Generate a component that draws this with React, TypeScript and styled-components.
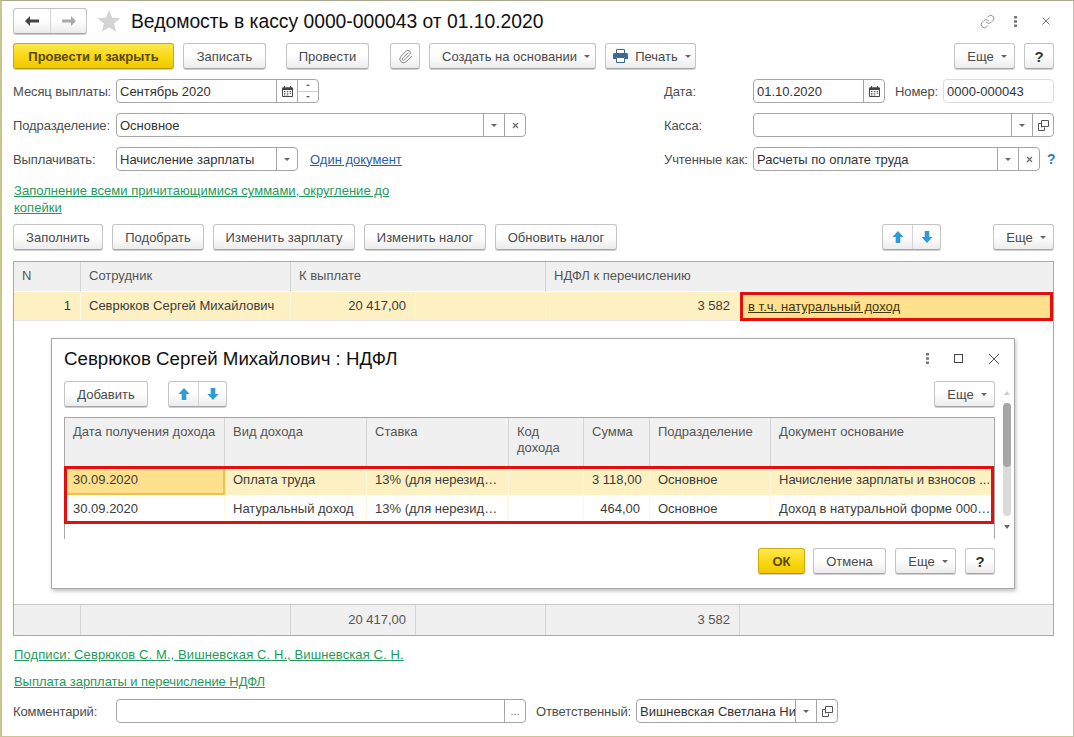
import React from "react";
import styled, { createGlobalStyle } from "styled-components";
import { Paperclip, Link } from "lucide-react";

const GlobalStyle = createGlobalStyle`
  html, body {
    margin: 0;
    padding: 0;
    background: #fff;
  }
  body {
    font-family: "Liberation Sans", Arial, sans-serif;
    font-size: 13px;
    color: #444;
  }
`;

const Caret = ({ $up }: { $up?: boolean }) => (
  <CaretSvg viewBox="0 0 6 3" $up={$up}>
    <path d="M0 0h6L3 3z" fill="currentColor" />
  </CaretSvg>
);

const SmallX = () => (
  <svg width="7" height="7" viewBox="0 0 7 7">
    <path d="M1 1l5 5M6 1L1 6" stroke="#666" strokeWidth="1.1" />
  </svg>
);

const CalendarIcon = () => (
  <svg width="11" height="11" viewBox="0 0 11 11">
    <path d="M0.5 2h10v8.5h-10z" fill="#fff" stroke="#444" />
    <path d="M0.5 1.5h10v2.5h-10z" fill="#444" />
    <path d="M2.5 0v2M8.5 0v2" stroke="#444" />
    <path d="M2 5.5h1.5M4.8 5.5h1.5M7.6 5.5h1.5M2 7.3h1.5M4.8 7.3h1.5M7.6 7.3h1.5M2 9h1.5M4.8 9h1.5" stroke="#555" />
  </svg>
);

const OpenIcon = () => (
  <svg width="11" height="11" viewBox="0 0 11 11">
    <path d="M3.5 7.5V0.5h7v6h-7" fill="#fff" stroke="#555" />
    <path d="M3.5 3.5H0.5v7h6V7.5" fill="none" stroke="#555" />
  </svg>
);

const ArrowH = ({ dir, color }: { dir: "left" | "right"; color: string }) => (
  <svg width="14" height="10" viewBox="0 0 14 10">
    <path
      d={dir === "left" ? "M0 5l5-5v3.4h9v3.2H5V10z" : "M14 5L9 0v3.4H0v3.2h9V10z"}
      fill={color}
    />
  </svg>
);

const ArrowV = ({ dir }: { dir: "up" | "down" }) => (
  <svg width="12" height="12" viewBox="0 0 12 13">
    <path
      d={dir === "up" ? "M6 0l6 6.5H8.5V13h-5V6.5H0z" : "M6 13L0 6.5h3.5V0h5v6.5H12z"}
      fill="#2f9ad6"
    />
  </svg>
);

const Star = () => (
  <svg width="24" height="24" viewBox="0 0 24 24">
    <path d="M12 1l3.2 7.7 8.3.6-6.4 5.3 2 8.1L12 18.4l-7.1 4.3 2-8.1L.5 9.3l8.3-.6z" fill="#d4d4d4" />
  </svg>
);

const Printer = () => (
  <svg width="15" height="14" viewBox="0 0 15 14">
    <path d="M3.5 0.5h8v4h-8z" fill="#fff" stroke="#3e6a8e" />
    <path d="M1.5 4h12A1.5 1.5 0 0 1 15 5.5V10h-3V8H3v2H0V5.5A1.5 1.5 0 0 1 1.5 4z" fill="#3e6a8e" />
    <path d="M3.5 8.5h8v5h-8z" fill="#fff" stroke="#3e6a8e" />
  </svg>
);

const Dots = () => (
  <svg width="3" height="11" viewBox="0 0 3 11">
    <path d="M0 0h3v2.4H0zM0 4.3h3v2.4H0zM0 8.6h3V11H0z" fill="#777" />
  </svg>
);

export default function App() {
  return (
    <>
      <GlobalStyle />
      <Page>
        <TitleRow>
          <ButtonGroup>
            <GroupCell $w={37}>
              <ArrowH dir="left" color="#444" />
            </GroupCell>
            <GroupCell $w={37}>
              <ArrowH dir="right" color="#aaa" />
            </GroupCell>
          </ButtonGroup>
          <StarWrap>
            <Star />
          </StarWrap>
          <Title>Ведомость в кассу 0000-000043 от 01.10.2020</Title>
          <WindowIcons>
            <Link size={15} color="#777" strokeWidth={1.3} />
            <Dots />
            <svg width="8" height="8" viewBox="0 0 8 8">
              <path d="M0.5 0.5l7 7M7.5 0.5l-7 7" stroke="#777" strokeWidth="1" />
            </svg>
          </WindowIcons>
        </TitleRow>

        <Toolbar>
          <PrimaryButton $w={161}>Провести и закрыть</PrimaryButton>
          <Button $w={83} $ml={9}>Записать</Button>
          <Button $w={83} $ml={20}>Провести</Button>
          <Button $w={30} $ml={21}>
            <Paperclip size={15} color="#888" strokeWidth={1.6} />
          </Button>
          <Button $w={167} $ml={9} $pl={7}>
            Создать на основании <Caret />
          </Button>
          <Button $w={91} $ml={9} $pl={3}>
            <Printer /> Печать <Caret />
          </Button>
          <Spacer />
          <Button $w={61} $pl={5}>
            Еще <Caret />
          </Button>
          <HelpButton $w={30} $ml={9}>?</HelpButton>
        </Toolbar>

        <Form>
          <FormCol>
            <FormRow>
              <Label $w={103}>Месяц выплаты:</Label>
              <Field $w={203}>
                <FieldValue>Сентябрь 2020</FieldValue>
                <FieldCell><CalendarIcon /></FieldCell>
                <SpinCell>
                  <SpinPart><Caret $up /></SpinPart>
                  <SpinPart><Caret /></SpinPart>
                </SpinCell>
              </Field>
            </FormRow>
            <FormRow>
              <Label $w={103}>Подразделение:</Label>
              <Field $w={410}>
                <FieldValue>Основное</FieldValue>
                <FieldCell><Caret /></FieldCell>
                <FieldCell><SmallX /></FieldCell>
              </Field>
            </FormRow>
            <FormRow>
              <Label $w={103}>Выплачивать:</Label>
              <Field $w={182}>
                <FieldValue>Начисление зарплаты</FieldValue>
                <FieldCell><Caret /></FieldCell>
              </Field>
              <BlueLink>Один документ</BlueLink>
            </FormRow>
          </FormCol>
          <FormCol>
            <FormRow>
              <Label $w={89}>Дата:</Label>
              <Field $w={132}>
                <FieldValue>01.10.2020</FieldValue>
                <FieldCell><CalendarIcon /></FieldCell>
              </Field>
              <NumberLabel>Номер:</NumberLabel>
              <Field $w={111} $light>
                <FieldValue>0000-000043</FieldValue>
              </Field>
            </FormRow>
            <FormRow>
              <Label $w={89}>Касса:</Label>
              <Field $w={301}>
                <FieldValue />
                <FieldCell><Caret /></FieldCell>
                <FieldCell><OpenIcon /></FieldCell>
              </Field>
            </FormRow>
            <FormRow>
              <Label $w={89}>Учтенные как:</Label>
              <Field $w={287}>
                <FieldValue>Расчеты по оплате труда</FieldValue>
                <FieldCell><Caret /></FieldCell>
                <FieldCell><SmallX /></FieldCell>
              </Field>
              <HelpMark>?</HelpMark>
            </FormRow>
          </FormCol>
        </Form>

        <FillLink>Заполнение всеми причитающимися суммами, округление до копейки</FillLink>

        <TableToolbar>
          <Button $w={90}>Заполнить</Button>
          <Button $w={92} $ml={9}>Подобрать</Button>
          <Button $w={142} $ml={9}>Изменить зарплату</Button>
          <Button $w={122} $ml={9}>Изменить налог</Button>
          <Button $w={122} $ml={9}>Обновить налог</Button>
          <Spacer />
          <ButtonGroup>
            <GroupCell $w={30}><ArrowV dir="up" /></GroupCell>
            <GroupCell $w={29}><ArrowV dir="down" /></GroupCell>
          </ButtonGroup>
          <Button $w={61} $ml={52} $pl={5}>
            Еще <Caret />
          </Button>
        </TableToolbar>

        <Table>
          <MainGrid>
            <HeadCell>N</HeadCell>
            <HeadCell>Сотрудник</HeadCell>
            <HeadCell $span={2}>К выплате</HeadCell>
            <HeadCell $span={2}>НДФЛ к перечислению</HeadCell>
          </MainGrid>
          <MainGrid>
            <RowCell $right>1</RowCell>
            <RowCell>Севрюков Сергей Михайлович</RowCell>
            <RowCell $right>20 417,00</RowCell>
            <RowCell />
            <RowCell $right>3 582</RowCell>
            <HighlightCell>в т.ч. натуральный доход</HighlightCell>
          </MainGrid>

          <TableBody>
            <Dialog>
              <DialogTitleRow>
                <DialogTitle>Севрюков Сергей Михайлович : НДФЛ</DialogTitle>
                <DialogIcons>
                  <Dots />
                  <MaxBox />
                  <svg width="12" height="12" viewBox="0 0 12 12">
                    <path d="M1 1l10 10M11 1L1 11" stroke="#555" strokeWidth="1" />
                  </svg>
                </DialogIcons>
              </DialogTitleRow>
              <DialogMain>
                <DialogContent>
                  <DialogToolbar>
                    <Button $w={84}>Добавить</Button>
                    <ButtonGroup $ml={20}>
                      <GroupCell $w={30}><ArrowV dir="up" /></GroupCell>
                      <GroupCell $w={29}><ArrowV dir="down" /></GroupCell>
                    </ButtonGroup>
                    <Spacer />
                    <Button $w={61} $pl={5}>
                      Еще <Caret />
                    </Button>
                  </DialogToolbar>
                  <IncomeTable>
                    <IncomeGrid $head>
                      <IncomeHead>Дата получения дохода</IncomeHead>
                      <IncomeHead>Вид дохода</IncomeHead>
                      <IncomeHead>Ставка</IncomeHead>
                      <IncomeHead>Код<br />дохода</IncomeHead>
                      <IncomeHead>Сумма</IncomeHead>
                      <IncomeHead>Подразделение</IncomeHead>
                      <IncomeHead>Документ основание</IncomeHead>
                    </IncomeGrid>
                    <SelectedRows>
                      <IncomeGrid $tinted>
                        <ActiveCell>30.09.2020</ActiveCell>
                        <IncomeCell>Оплата труда</IncomeCell>
                        <IncomeCell>13% (для нерезид…</IncomeCell>
                        <IncomeCell />
                        <IncomeCell $right>3 118,00</IncomeCell>
                        <IncomeCell>Основное</IncomeCell>
                        <IncomeCell>Начисление зарплаты и взносов ...</IncomeCell>
                      </IncomeGrid>
                      <IncomeGrid>
                        <IncomeCell>30.09.2020</IncomeCell>
                        <IncomeCell>Натуральный доход</IncomeCell>
                        <IncomeCell>13% (для нерезид…</IncomeCell>
                        <IncomeCell />
                        <IncomeCell $right>464,00</IncomeCell>
                        <IncomeCell>Основное</IncomeCell>
                        <IncomeCell>Доход в натуральной форме 000…</IncomeCell>
                      </IncomeGrid>
                    </SelectedRows>
                  </IncomeTable>
                </DialogContent>
                <ScrollBar>
                  <ScrollArrow $up />
                  <ScrollTrack>
                    <ScrollThumb />
                  </ScrollTrack>
                  <ScrollArrow />
                </ScrollBar>
              </DialogMain>
              <DialogFooter>
                <PrimaryButton $w={47}>ОК</PrimaryButton>
                <Button $w={73} $ml={8}>Отмена</Button>
                <Button $w={61} $ml={9} $pl={5}>
                  Еще <Caret />
                </Button>
                <HelpButton $w={30} $ml={9}>?</HelpButton>
              </DialogFooter>
            </Dialog>
          </TableBody>

          <MainGrid $foot>
            <FootCell />
            <FootCell />
            <FootCell $right>20 417,00</FootCell>
            <FootCell />
            <FootCell $right>3 582</FootCell>
            <FootCell />
          </MainGrid>
        </Table>

        <SignLink>Подписи: Севрюков С. М., Вишневская С. Н., Вишневская С. Н.</SignLink>
        <PayLink>Выплата зарплаты и перечисление НДФЛ</PayLink>

        <BottomRow>
          <Label $w={103}>Комментарий:</Label>
          <Field $w={410}>
            <FieldValue />
            <FieldCell><EllipsisMark>...</EllipsisMark></FieldCell>
          </Field>
          <OwnerLabel>Ответственный:</OwnerLabel>
          <Field $w={202}>
            <FieldValue>Вишневская Светлана Ни</FieldValue>
            <FieldCell><Caret /></FieldCell>
            <FieldCell><OpenIcon /></FieldCell>
          </Field>
        </BottomRow>
      </Page>
    </>
  );
}

const Page = styled.div`
  width: 1074px;
  height: 737px;
  box-sizing: border-box;
  overflow: hidden;
  background: #fff;
  border: 1px solid #c9c58f;
  border-left-width: 2px;
  border-top-color: #a9a88e;
  padding: 8px 19px 0 11px;
`;

const Spacer = styled.div`
  flex: 1;
`;

const TitleRow = styled.div`
  display: flex;
  align-items: center;
  height: 24px;
`;

const StarWrap = styled.div`
  display: flex;
  margin-left: 10px;
`;

const Title = styled.h1`
  margin: 1px 0 0 10px;
  font-size: 19.3px;
  font-weight: 400;
  color: #111;
  white-space: nowrap;
`;

const WindowIcons = styled.div`
  display: flex;
  align-items: center;
  gap: 19px;
  margin-left: auto;
  padding-right: 4px;
  height: 24px;
  & > svg:last-child {
    margin-left: 6px;
  }
`;

const Button = styled.button<{ $w: number; $ml?: number; $pl?: number }>`
  display: inline-flex;
  align-items: center;
  justify-content: center;
  gap: 7px;
  box-sizing: border-box;
  width: ${(p) => p.$w}px;
  height: 26px;
  margin: 0 0 0 ${(p) => p.$ml ?? 0}px;
  padding: 0 0 0 ${(p) => p.$pl ?? 0}px;
  font: 13px "Liberation Sans", Arial, sans-serif;
  color: #4a4a4a;
  white-space: nowrap;
  background: linear-gradient(#ffffff, #ffffff 45%, #ececec);
  border: 1px solid #c4c4c4;
  border-bottom-color: #a6a6a6;
  border-radius: 3px;
  box-shadow: 0 1px 0 #d0d0d0;
`;

const PrimaryButton = styled(Button)`
  font-weight: 700;
  color: #5a4700;
  background: linear-gradient(#fde84f, #f8d711 55%, #f3c800);
  border-color: #d0aa0a;
  border-bottom-color: #b8960a;
`;

const HelpButton = styled(Button)`
  font-size: 15px;
  font-weight: 700;
  color: #333;
`;

const ButtonGroup = styled.div<{ $ml?: number }>`
  display: flex;
  height: 24px;
  margin-left: ${(p) => p.$ml ?? 0}px;
  border: 1px solid #c4c4c4;
  border-bottom-color: #a6a6a6;
  border-radius: 3px;
  background: linear-gradient(#ffffff, #ffffff 45%, #ececec);
  box-shadow: 0 1px 0 #d0d0d0;
  & > div + div {
    border-left: 1px solid #d4d4d4;
  }
`;

const GroupCell = styled.div<{ $w: number }>`
  display: flex;
  align-items: center;
  justify-content: center;
  box-sizing: border-box;
  width: ${(p) => p.$w - 1}px;
`;

const CaretSvg = styled.svg<{ $up?: boolean }>`
  width: 6px;
  height: 3px;
  color: #666;
  transform: ${(p) => (p.$up ? "rotate(180deg)" : "none")};
`;

const Toolbar = styled.div`
  display: flex;
  align-items: center;
  height: 26px;
  margin-top: 10px;
`;

const Form = styled.div`
  display: flex;
  justify-content: space-between;
  margin-top: 10px;
`;

const FormCol = styled.div`
  display: flex;
  flex-direction: column;
  gap: 10px;
`;

const FormRow = styled.div`
  display: flex;
  align-items: center;
  height: 24px;
`;

const Label = styled.div<{ $w: number }>`
  flex: none;
  width: ${(p) => p.$w}px;
  letter-spacing: -0.1px;
  color: #4d4d4d;
  white-space: nowrap;
`;

const NumberLabel = styled.div`
  box-sizing: border-box;
  width: 58px;
  padding-left: 10px;
  letter-spacing: -0.1px;
  color: #4d4d4d;
`;

const OwnerLabel = styled.div`
  box-sizing: border-box;
  width: 110px;
  padding-left: 10px;
  letter-spacing: -0.1px;
  color: #4d4d4d;
  white-space: nowrap;
`;

const Field = styled.div<{ $w: number; $light?: boolean }>`
  display: flex;
  box-sizing: border-box;
  flex: none;
  width: ${(p) => p.$w}px;
  height: 24px;
  background: #fff;
  border: 1px solid ${(p) => (p.$light ? "#dcdcdc" : "#a6a6a6")};
  border-radius: 4px;
`;

const FieldValue = styled.div`
  flex: 1;
  min-width: 0;
  padding-left: 3px;
  line-height: 23px;
  color: #333;
  white-space: nowrap;
  overflow: hidden;
`;

const FieldCell = styled.div`
  display: flex;
  align-items: center;
  justify-content: center;
  box-sizing: border-box;
  flex: none;
  width: 21px;
  border-left: 1px solid #a6a6a6;
`;

const SpinCell = styled.div`
  display: flex;
  flex-direction: column;
  box-sizing: border-box;
  flex: none;
  width: 21px;
  border-left: 1px solid #a6a6a6;
`;

const SpinPart = styled.div`
  flex: 1;
  display: flex;
  align-items: center;
  justify-content: center;
  & + & {
    border-top: 1px solid #cfcfcf;
  }
  svg {
    width: 4px;
    height: 2px;
  }
`;

const EllipsisMark = styled.span`
  font-size: 11px;
  line-height: 1;
  color: #666;
`;

const BlueLink = styled.a`
  margin-left: 12px;
  color: #2a5ea8;
  text-decoration: underline;
`;

const HelpMark = styled.span`
  width: 7px;
  margin-left: 7px;
  font-size: 14px;
  font-weight: 700;
  color: #2a7fb8;
`;

const GreenLink = styled.a`
  display: block;
  color: #1f9a5c;
  text-decoration: underline;
  line-height: 17px;
`;

const FillLink = styled(GreenLink)`
  width: 385px;
  margin: 11px 0 0 1px;
  letter-spacing: 0.03px;
`;

const SignLink = styled(GreenLink)`
  margin: 10px 0 0 1px;
  letter-spacing: 0.1px;
`;

const PayLink = styled(GreenLink)`
  margin: 10px 0 0 1px;
  letter-spacing: -0.05px;
`;

const TableToolbar = styled.div`
  display: flex;
  align-items: center;
  height: 26px;
  margin-top: 8px;
`;

const Table = styled.div`
  display: flex;
  flex-direction: column;
  box-sizing: border-box;
  height: 375px;
  margin-top: 11px;
  background: #fff;
  border: 1px solid #a8a8a8;
`;

const MainGrid = styled.div<{ $foot?: boolean }>`
  display: grid;
  grid-template-columns: 67px 210px 125px 130px 194px 1fr;
  flex: none;
  border-top: ${(p) => (p.$foot ? "1px solid #c8c8c8" : "0")};
`;

const HeadCell = styled.div<{ $span?: number }>`
  grid-column: span ${(p) => p.$span ?? 1};
  box-sizing: border-box;
  height: 30px;
  padding: 6px 8px 0;
  background: #f0f0f0;
  border-right: 1px solid #d4d4d4;
  border-bottom: 1px solid #fff;
  color: #555;
  &:last-child {
    border-right: 0;
  }
`;

const RowCell = styled.div<{ $right?: boolean }>`
  box-sizing: border-box;
  height: 29px;
  padding: 0 ${(p) => (p.$right ? 9 : 8)}px 0 8px;
  line-height: 27px;
  text-align: ${(p) => (p.$right ? "right" : "left")};
  background: #fdf0c2;
  border-right: 1px solid #fff8e0;
  border-bottom: 1px solid #e6e6e6;
  color: #3c3c3c;
  white-space: nowrap;
`;

const HighlightCell = styled.div`
  box-sizing: border-box;
  height: 29px;
  padding: 0 5px;
  line-height: 23px;
  letter-spacing: 0.05px;
  background: #ffe08c;
  border: 3px solid #e30e0e;
  color: #40340f;
  text-decoration: underline;
  white-space: nowrap;
`;

const FootCell = styled.div<{ $right?: boolean }>`
  box-sizing: border-box;
  height: 30px;
  padding: 0 ${(p) => (p.$right ? 9 : 8)}px 0 8px;
  line-height: 30px;
  text-align: ${(p) => (p.$right ? "right" : "left")};
  background: #f0f0f0;
  border-right: 1px solid #d4d4d4;
  color: #555;
  &:last-child {
    border-right: 0;
  }
`;

const TableBody = styled.div`
  position: relative;
  flex: 1;
`;

const Dialog = styled.div`
  position: absolute;
  left: 37px;
  top: 17px;
  display: flex;
  flex-direction: column;
  box-sizing: border-box;
  width: 964px;
  height: 251px;
  padding: 0 19px 0 12px;
  background: #fff;
  border: 1px solid #a8a8a8;
  box-shadow: 1px 2px 4px rgba(0, 0, 0, 0.25);
`;

const DialogTitleRow = styled.div`
  display: flex;
  align-items: center;
  box-sizing: border-box;
  height: 42px;
  padding-bottom: 3px;
`;

const DialogTitle = styled.div`
  font-size: 18.7px;
  color: #111;
  white-space: nowrap;
`;

const DialogIcons = styled.div`
  display: flex;
  align-items: center;
  gap: 25px;
  margin-left: auto;
  margin-right: -5px;
`;

const MaxBox = styled.div`
  box-sizing: border-box;
  width: 9px;
  height: 9px;
  border: 1px solid #444;
`;

const DialogMain = styled.div`
  display: flex;
  gap: 8px;
  margin-right: -16px;
`;

const DialogContent = styled.div`
  flex: 1;
  min-width: 0;
`;

const DialogToolbar = styled.div`
  display: flex;
  align-items: center;
  height: 26px;
`;

const IncomeTable = styled.div`
  box-sizing: border-box;
  height: 122px;
  margin-top: 10px;
  border: 1px solid #a8a8a8;
  border-bottom: 0;
`;

const IncomeGrid = styled.div<{ $head?: boolean; $tinted?: boolean }>`
  display: grid;
  grid-template-columns: 160px 142px 142px 75px 66px 121px 1fr;
  background: ${(p) => (p.$head ? "#f0f0f0" : p.$tinted ? "#fdf0c2" : "#fff")};
`;

const IncomeHead = styled.div`
  box-sizing: border-box;
  height: 48px;
  padding: 6px 0 0 8px;
  line-height: 16px;
  border-right: 1px solid #d4d4d4;
  color: #555;
  white-space: nowrap;
  &:last-child {
    border-right: 0;
  }
`;

const SelectedRows = styled.div`
  position: relative;
  &::after {
    content: "";
    position: absolute;
    inset: 0 0 0 -1px;
    border: 3px solid #e30e0e;
    pointer-events: none;
  }
`;

const IncomeCell = styled.div<{ $right?: boolean }>`
  box-sizing: border-box;
  height: 29px;
  padding: 0 ${(p) => (p.$right ? 9 : 8)}px 0 8px;
  line-height: 28px;
  text-align: ${(p) => (p.$right ? "right" : "left")};
  border-right: 1px solid #fff8e0;
  color: #3c3c3c;
  white-space: nowrap;
  overflow: hidden;
`;

const ActiveCell = styled(IncomeCell)`
  background: #ffe08c;
  border-right: 0;
  box-shadow: inset -2px -2px 0 #f0c04a;
`;

const ScrollBar = styled.div`
  display: flex;
  flex-direction: column;
  align-items: center;
  flex: none;
  width: 8px;
  padding-top: 8px;
  height: 142px;
`;

const ScrollArrow = styled.div<{ $up?: boolean }>`
  flex: none;
  width: 0;
  height: 0;
  margin: 2px 0;
  border-left: 3.5px solid transparent;
  border-right: 3.5px solid transparent;
  ${(p) => (p.$up ? "border-bottom: 4px solid #ccc;" : "border-top: 4px solid #666;")}
`;

const ScrollTrack = styled.div`
  flex: 1;
  width: 8px;
  margin: 6px 0 7px;
  background: #dadada;
  border-radius: 4px;
`;

const ScrollThumb = styled.div`
  height: 64px;
  background: #a6a6a6;
  border-radius: 4px;
`;

const DialogFooter = styled.div`
  display: flex;
  justify-content: flex-end;
  margin-top: 9px;
`;

const BottomRow = styled.div`
  display: flex;
  align-items: center;
  height: 24px;
  margin-top: 9px;
`;
